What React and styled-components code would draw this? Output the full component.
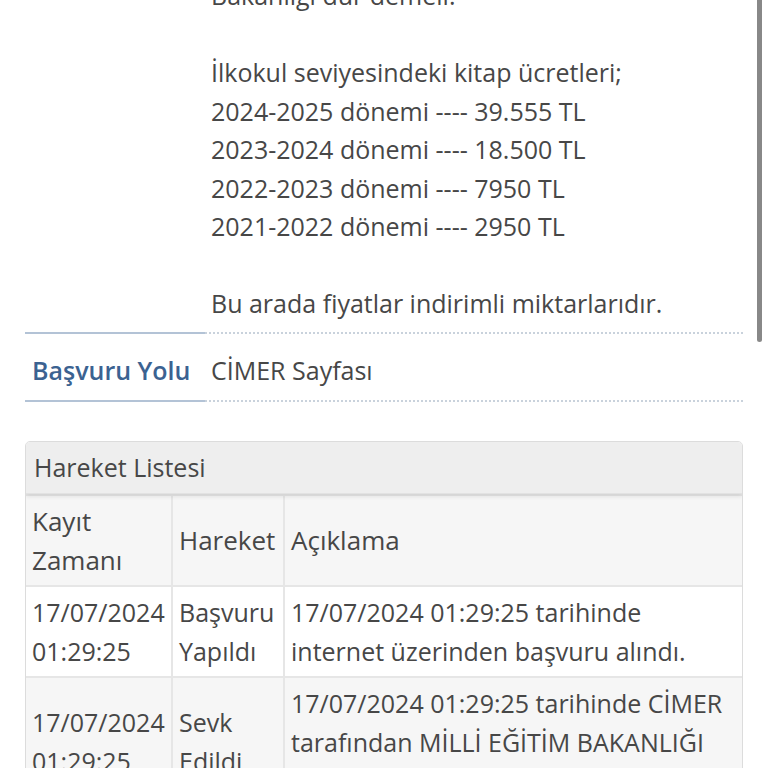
import React from "react";
import styled, { createGlobalStyle } from "styled-components";

const Global = createGlobalStyle`
  html, body { margin: 0; padding: 0; background: #fff; }
  body {
    font-family: "Open Sans", "Noto Sans", sans-serif;
    color: #474747;
    overflow: hidden;
  }
`;

const Viewport = styled.div`
  position: relative;
  width: 768px;
  height: 768px;
  overflow: hidden;
`;

const Content = styled.main`
  margin-top: -24px;
  padding: 0 25px 0 25px;
  font-size: 25px;
  line-height: 38.5px;
`;

const DetailRow = styled.div`
  display: grid;
  grid-template-columns: 180px 1fr;
`;

const Label = styled.div`
  color: #3b6291;
  font-weight: 600;
  padding: ${(p) => (p.$pad ? "17px 7px 11px" : "0 7px")};
  border-bottom: 2px solid #b3c3d6;
`;

const Value = styled.div`
  padding: ${(p) => (p.$pad ? "17px 6px 11px" : "0 6px 9px")};
  border-bottom: 2px dotted #c9d2dc;
`;

const Line = styled.div`
  min-height: 38.5px;
`;

const Panel = styled.section`
  margin-top: 39px;
  border: 1px solid #dcdcdc;
  border-radius: 5px 5px 0 0;
  overflow: hidden;
`;

const PanelHead = styled.div`
  background: #eeeeee;
  font-size: 25px;
  line-height: 51px;
  padding: 0 8px;
  border-bottom: 1px solid #e2e2e2;
  box-shadow: 0 3px 4px rgba(0, 0, 0, 0.08);
  position: relative;
`;

const Table = styled.table`
  width: 100%;
  border-collapse: collapse;
  table-layout: fixed;
`;

const Cell = styled.td`
  border: 2px solid #e6e6e6;
  padding: 6px 6px;
  vertical-align: middle;
  text-align: left;
  font-weight: normal;
  &:first-child { border-left: none; }
  &:last-child { border-right: none; }
`;

const HeadCell = styled(Cell).attrs({ as: "th" })`
  font-size: 26px;
`;

const Row = styled.tr`
  background: ${(p) => (p.$alt ? "#f6f6f6" : "#ffffff")};
`;

const Scrollbar = styled.div`
  position: absolute;
  right: 6px;
  top: 0;
  width: 5px;
  height: 342px;
  background: #888;
  border-radius: 0 0 3px 3px;
`;

const priceLines = [
  "Bakanlığı dur demeli.",
  "",
  "İlkokul seviyesindeki kitap ücretleri;",
  "2024-2025 dönemi ---- 39.555 TL",
  "2023-2024 dönemi ---- 18.500 TL",
  "2022-2023 dönemi ---- 7950 TL",
  "2021-2022 dönemi ---- 2950 TL",
  "",
  "Bu arada fiyatlar indirimli miktarlarıdır.",
];

const rows = [
  {
    time: ["17/07/2024", "01:29:25"],
    action: ["Başvuru", "Yapıldı"],
    text: "17/07/2024 01:29:25 tarihinde internet üzerinden başvuru alındı.",
  },
  {
    time: ["17/07/2024", "01:29:25"],
    action: ["Sevk", "Edildi"],
    text: "17/07/2024 01:29:25 tarihinde CİMER tarafından MİLLİ EĞİTİM BAKANLIĞI Bakanlığına sevk edildi.",
  },
];

export default function App() {
  return (
    <Viewport>
      <Global />
      <Content>
        <DetailRow>
          <Label />
          <Value>
            {priceLines.map((l, i) => (
              <Line key={i}>{l}</Line>
            ))}
          </Value>
        </DetailRow>
        <DetailRow>
          <Label $pad>Başvuru Yolu</Label>
          <Value $pad>CİMER Sayfası</Value>
        </DetailRow>

        <Panel>
          <PanelHead>Hareket Listesi</PanelHead>
          <Table>
            <colgroup>
              <col style={{ width: 146 }} />
              <col style={{ width: 112 }} />
              <col />
            </colgroup>
            <thead>
              <Row $alt>
                <HeadCell>Kayıt Zamanı</HeadCell>
                <HeadCell>Hareket</HeadCell>
                <HeadCell>Açıklama</HeadCell>
              </Row>
            </thead>
            <tbody>
              {rows.map((r, i) => (
                <Row key={i} $alt={i % 2 === 1}>
                  <Cell>{r.time[0]} {r.time[1]}</Cell>
                  <Cell>{r.action[0]} {r.action[1]}</Cell>
                  <Cell>{r.text}</Cell>
                </Row>
              ))}
            </tbody>
          </Table>
        </Panel>
      </Content>
      <Scrollbar />
    </Viewport>
  );
}
